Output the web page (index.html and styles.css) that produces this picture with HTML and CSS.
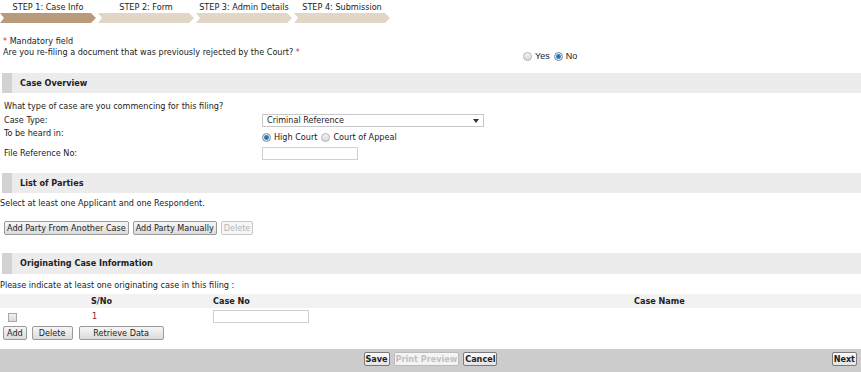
FILE: index.html
```html
<!DOCTYPE html>
<html lang="en">
<head>
    <meta charset="UTF-8">
    <title>Case Info</title>
    <link rel="stylesheet" href="styles.css">
</head>
<body>
<div class="steps">
    <div class="step active"><span>STEP 1: Case Info</span><i></i></div>
    <div class="step"><span>STEP 2: Form</span><i></i></div>
    <div class="step"><span>STEP 3: Admin Details</span><i></i></div>
    <div class="step"><span>STEP 4: Submission</span><i></i></div>
</div>

<div class="mandatory"><b class="req">*</b> Mandatory field</div>
<div class="refile">
    <div class="refile-q">Are you re-filing a document that was previously rejected by the Court? <b class="req">*</b></div>
    <div class="opts arial">
        <label><input type="radio" name="refile"> Yes</label>
        <label><input type="radio" name="refile" checked> No</label>
    </div>
</div>

<div class="sec">Case Overview</div>
<div class="form">
    <div class="row">What type of case are you commencing for this filing?</div>
    <div class="row r2">
        <div class="lbl">Case Type:</div>
        <div class="select">Criminal Reference<span class="caret"></span></div>
    </div>
    <div class="row r3">
        <div class="lbl">To be heard in:</div>
        <div class="opts heard">
            <label><input type="radio" name="court" checked> High Court</label>
            <label><input type="radio" name="court"> Court of Appeal</label>
        </div>
    </div>
    <div class="row r4">
        <div class="lbl">File Reference No:</div>
        <input type="text" class="txt">
    </div>
</div>

<div class="sec sec2">List of Parties</div>
<div class="note">Select at least one Applicant and one Respondent.</div>
<div class="btns parties">
    <button>Add Party From Another Case</button>
    <button>Add Party Manually</button>
    <button disabled>Delete</button>
</div>

<div class="sec sec3">Originating Case Information</div>
<div class="note n2">Please indicate at least one originating case in this filing :</div>
<div class="grid head">
    <div></div>
    <div>S/No</div>
    <div>Case No</div>
    <div>Case Name</div>
</div>
<div class="grid body">
    <div><span class="check"></span></div>
    <div class="num">1</div>
    <div><input type="text" class="txt"></div>
    <div></div>
</div>
<div class="btns orig">
    <button class="b-add">Add</button>
    <button class="b-del">Delete</button>
    <button class="b-ret">Retrieve Data</button>
</div>

<div class="footer">
    <div></div>
    <div class="btns">
        <button>Save</button>
        <button disabled>Print Preview</button>
        <button>Cancel</button>
    </div>
    <div class="right"><button>Next</button></div>
</div>
</body>
</html>
```

FILE: styles.css
```css
* {
    margin: 0;
    padding: 0;
    box-sizing: border-box;
}
body {
    font-family: "DejaVu Sans Condensed", "DejaVu Sans", sans-serif;
    font-size: 9px;
    color: #222;
    background: #fff;
    width: 861px;
    height: 372px;
    overflow: hidden;
}

/* wizard steps */
.steps {
    display: flex;
    gap: 2px;
    padding-top: 2px;
    height: 23px;
}
.step {
    width: 96px;
    text-align: center;
}
.step span {
    display: block;
    height: 11px;
    line-height: 11px;
}
.step i {
    display: block;
    height: 10px;
    background: #e2d6c6;
    clip-path: polygon(0 0, 91px 0, 100% 50%, 91px 100%, 0 100%, 4px 50%);
}
.step.active i {
    background: #b99a7b;
}

.req {
    color: #e03030;
    font-weight: normal;
}
.mandatory {
    margin-top: 13px;
    padding-left: 3px;
    height: 11px;
    line-height: 11px;
}
.refile {
    display: flex;
    padding-left: 3px;
    height: 15px;
    line-height: 11px;
}
.refile-q {
    width: 520px;
}
.refile .opts {
    margin-top: 5px;
}
.arial {
    font-family: "Liberation Sans", Arial, sans-serif;
}

/* radios */
.opts {
    display: flex;
    align-items: center;
    gap: 4px;
    height: 9px;
    line-height: 9px;
}
.opts label {
    display: inline-flex;
    align-items: center;
    gap: 3px;
}
input[type=radio] {
    appearance: none;
    width: 9px;
    height: 9px;
    border-radius: 50%;
    border: 1px solid #b4b4b4;
    background: linear-gradient(#f4f4f4, #d8d8d8);
}
input[type=radio]:checked {
    border-color: #7a8ea0;
    background: radial-gradient(circle, #1f5f9a 0, #3b86c4 2px, #e8eef4 3px, #c8d0d8 5px);
}

/* section headers */
.sec {
    margin: 11px 0 0 2px;
    height: 20px;
    line-height: 20px;
    background: #ececec;
    border-left: 10px solid #d2d2d2;
    padding-left: 8px;
    font-weight: bold;
}
.sec2 {
    margin-top: 13px;
}
.sec3 {
    margin-top: 18px;
    height: 21px;
    line-height: 21px;
}

.form {
    padding: 8px 0 0 4px;
}
.row {
    display: flex;
    height: 11px;
    line-height: 11px;
}
.lbl {
    width: 258px;
}
.r2 {
    margin-top: 2px;
    height: 13px;
    align-items: center;
}
.r3 {
    margin-top: 1px;
    height: 16px;
}
.r3 .opts {
    margin-top: 5px;
}
.r4 {
    margin-top: 3px;
    height: 13px;
    align-items: center;
}

.select {
    position: relative;
    width: 222px;
    height: 13px;
    line-height: 11px;
    border: 1px solid #c8c8c8;
    padding-left: 4px;
}
.caret {
    position: absolute;
    right: 4px;
    top: 4px;
    border-left: 3px solid transparent;
    border-right: 3px solid transparent;
    border-top: 4px solid #333;
}
.txt {
    display: block;
    width: 96px;
    height: 13px;
    border: 1px solid #d0d0d0;
    font: inherit;
}

.note {
    margin-top: 5px;
    height: 11px;
    line-height: 11px;
}
.n2 {
    margin-top: 6px;
}

/* buttons */
.btns {
    display: flex;
    gap: 4px;
    height: 14px;
}
button {
    font-family: inherit;
    font-size: 9px;
    color: #222;
    height: 14px;
    padding: 0 2px;
    line-height: 12px;
    border: 1px solid #9a9a9a;
    border-radius: 2px;
    background: linear-gradient(#f6f6f6, #dcdcdc);
}
button:disabled {
    color: #b4b4b4;
    border-color: #c8c8c8;
    background: #f6f6f6;
}
.parties {
    margin: 12px 0 0 4px;
}

/* originating case table */
.grid {
    display: grid;
    grid-template-columns: 91px 122px 421px 1fr;
}
.head {
    margin-top: 3px;
    height: 14px;
    line-height: 14px;
    background: #f2f2f2;
    font-weight: bold;
}
.body {
    margin-top: 1px;
    height: 14px;
    align-items: center;
}
.check {
    display: block;
    margin-left: 8px;
    margin-top: 2px;
    width: 9px;
    height: 9px;
    border: 1px solid #a8a8a8;
    background: linear-gradient(#f0f0f0, #dadada);
}
.num {
    padding-left: 1px;
    color: #8a1a1a;
}
.orig {
    margin: 3px 0 0 3px;
    gap: 5px;
}
.b-add {
    padding: 0 3px;
}
.b-del {
    width: 41px;
}
.b-ret {
    width: 85px;
    margin-left: 1px;
}

/* bottom bar */
.footer {
    margin-top: 9px;
    height: 24px;
    background: #cccccc;
    display: grid;
    grid-template-columns: 1fr auto 1fr;
    align-items: start;
    padding-top: 3px;
}
.footer button {
    font-weight: bold;
    padding: 0 1px;
    background: linear-gradient(#fafafa, #e4e4e4);
    border-color: #7a7a7a;
}
.footer button:disabled {
    border-color: #bbb;
    background: #f4f4f4;
    color: #c0c0c0;
}
.footer .right {
    display: flex;
    justify-content: flex-end;
    padding-right: 4px;
}
```
